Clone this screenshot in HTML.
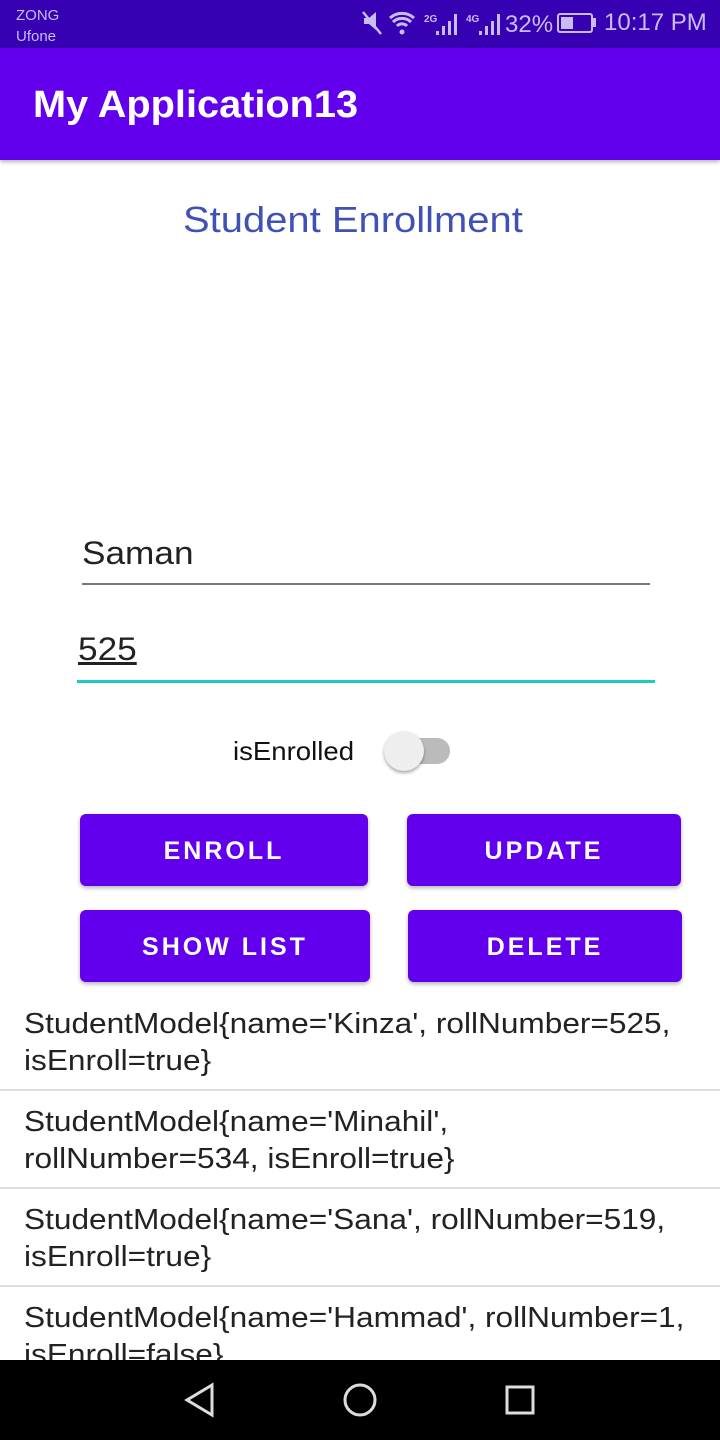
<!DOCTYPE html>
<html><head><style>
*{margin:0;padding:0;box-sizing:border-box}
body{width:720px;height:1440px;position:relative;overflow:hidden;background:#fff;font-family:"Liberation Sans",sans-serif}
.a{position:absolute;transform-origin:left top}
.btn{position:absolute;background:#6200ee;color:#fff;border-radius:6px;font-size:25px;font-weight:bold;letter-spacing:3px;display:flex;align-items:center;justify-content:center;box-shadow:0 2px 4px rgba(0,0,0,.3);padding-top:3px}
.item{position:absolute;left:24px;font-size:29px;color:#222;line-height:37px;transform:scaleX(1.09);transform-origin:left top;white-space:nowrap}
.sep{position:absolute;left:0;width:720px;height:2px;background:#ddd}
</style></head><body>
<div class="a" style="left:0;top:0;width:720px;height:48px;background:#3700b3"></div>
<div class="a" style="left:16px;top:5px;font-size:15px;color:#c9bdf0;line-height:21px">ZONG<br>Ufone</div>
<svg class="a" style="left:360px;top:8px" width="200" height="32">
<g fill="#c9bdf0" stroke="#c9bdf0">
<path d="M4 10h5l7-6v18l-7-6H4z" stroke-width="0"/><path d="M3 4l18 22" stroke-width="2.5" fill="none"/>
<path d="M30 10a18 18 0 0 1 24 0M33 14a13 13 0 0 1 18 0M37 18a7 7 0 0 1 10 0" fill="none" stroke-width="3"/><circle cx="42" cy="24" r="2.5" stroke-width="0"/>
</g>
<g fill="#c9bdf0" font-family="Liberation Sans" font-size="10" font-weight="bold"><text x="64" y="14">2G</text><text x="106" y="14">4G</text></g>
<g fill="#c9bdf0"><rect x="76" y="23" width="3" height="4"/><rect x="82" y="18" width="3" height="9"/><rect x="88" y="13" width="3" height="14"/><rect x="94" y="6" width="3" height="21"/>
<rect x="119" y="23" width="3" height="4"/><rect x="125" y="18" width="3" height="9"/><rect x="131" y="13" width="3" height="14"/><rect x="137" y="6" width="3" height="21"/></g>
<text x="145" y="24" fill="#c9bdf0" font-family="Liberation Sans" font-size="24">32%</text>
</svg>
<div class="a" style="left:557px;top:13px;width:36px;height:20px;border:2px solid #c9bdf0;border-radius:3px"><div style="width:12px;height:12px;margin:2px;background:#c9bdf0"></div></div>
<div class="a" style="left:593px;top:18px;width:3px;height:9px;background:#c9bdf0"></div>
<div class="a" style="left:604px;top:9px;font-size:24px;color:#c9bdf0">10:17 PM</div>
<div class="a" style="left:0;top:48px;width:720px;height:112px;background:#6200ee;box-shadow:0 2px 4px rgba(0,0,0,.3)"></div>
<div class="a" style="left:33px;top:84px;font-size:38px;font-weight:bold;color:#fff;transform:scaleX(1.045)">My Application13</div>
<div class="a" style="left:183px;top:199px;font-size:36px;color:#3f51b5;transform:scaleX(1.11)">Student Enrollment</div>
<div class="a" style="left:82px;top:535px;font-size:32px;color:#222;transform:scaleX(1.1)">Saman</div>
<div class="a" style="left:82px;top:583px;width:568px;height:2px;background:#777"></div>
<div class="a" style="left:78px;top:631px;font-size:32px;color:#222;text-decoration:underline;transform:scaleX(1.1)">525</div>
<div class="a" style="left:77px;top:680px;width:578px;height:3px;background:#1ccbc0"></div>
<div class="a" style="left:233px;top:736px;font-size:26px;color:#111;transform:scaleX(1.06)">isEnrolled</div>
<div class="a" style="left:390px;top:738px;width:60px;height:26px;border-radius:13px;background:#bbb"></div>
<div class="a" style="left:384px;top:731px;width:40px;height:40px;border-radius:50%;background:#eee;box-shadow:0 2px 3px rgba(0,0,0,.35)"></div>
<div class="btn" style="left:80px;top:814px;width:288px;height:72px">ENROLL</div>
<div class="btn" style="left:407px;top:814px;width:274px;height:72px">UPDATE</div>
<div class="btn" style="left:80px;top:910px;width:290px;height:72px">SHOW LIST</div>
<div class="btn" style="left:408px;top:910px;width:274px;height:72px">DELETE</div>
<div class="item" style="top:1006px">StudentModel{name='Kinza', rollNumber=525,<br>isEnroll=true}</div>
<div class="sep" style="top:1089px"></div>
<div class="item" style="top:1104px">StudentModel{name='Minahil',<br>rollNumber=534, isEnroll=true}</div>
<div class="sep" style="top:1187px"></div>
<div class="item" style="top:1202px">StudentModel{name='Sana', rollNumber=519,<br>isEnroll=true}</div>
<div class="sep" style="top:1285px"></div>
<div class="item" style="top:1300px">StudentModel{name='Hammad', rollNumber=1,<br>isEnroll=false}</div>
<div class="a" style="left:0;top:1360px;width:720px;height:80px;background:#000">
<svg width="720" height="80"><g fill="none" stroke="#ddd" stroke-width="3"><path d="M212 25 L187 40 L212 55 Z"/><circle cx="360" cy="40" r="15"/><rect x="507" y="27" width="26" height="26"/></g></svg>
</div>
</body></html>
